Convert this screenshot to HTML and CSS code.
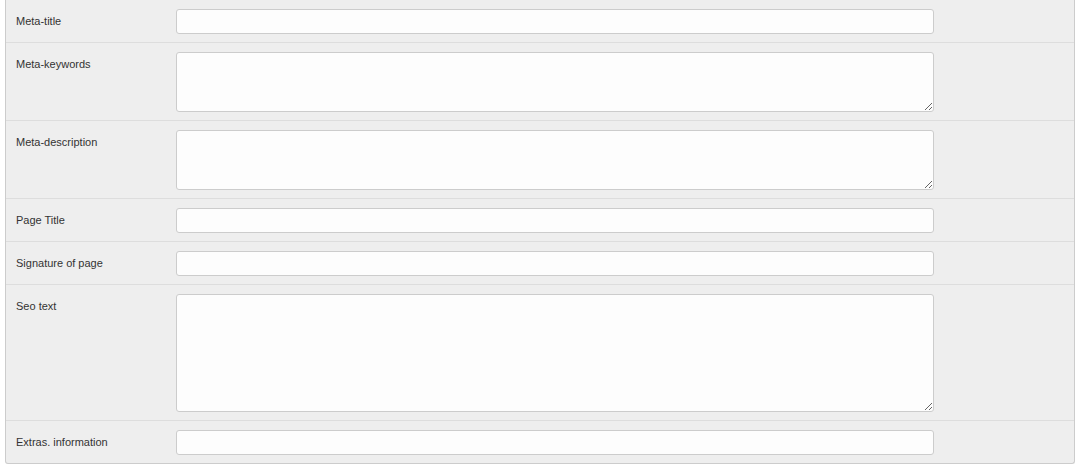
FILE: index.html
```html
<!doctype html>
<html lang="en">
	<head>
		<meta charset="utf-8">
		<title>SEO</title>
		<link rel="stylesheet" href="styles.css">
	</head>
	<body>
		<div class="seo-form">
			<div class="form-row">
				<label class="form-label" for="meta_title">Meta-title</label>
				<input id="meta_title" class="form-input" type="text" />
			</div>
			<div class="form-row">
				<label class="form-label" for="meta_keywords">Meta-keywords</label>
				<textarea id="meta_keywords" class="form-input form-area"></textarea>
			</div>
			<div class="form-row">
				<label class="form-label" for="meta_description">Meta-description</label>
				<textarea id="meta_description" class="form-input form-area"></textarea>
			</div>
			<div class="form-row">
				<label class="form-label" for="page_title">Page Title</label>
				<input id="page_title" class="form-input" type="text" />
			</div>
			<div class="form-row">
				<label class="form-label" for="page_signature">Signature of page</label>
				<input id="page_signature" class="form-input" type="text" />
			</div>
			<div class="form-row">
				<label class="form-label" for="seo_text">Seo text</label>
				<textarea id="seo_text" class="form-input form-area form-area-big"></textarea>
			</div>
			<div class="form-row">
				<label class="form-label" for="extra_info">Extras. information</label>
				<input id="extra_info" class="form-input" type="text" />
			</div>
		</div>
	</body>
</html>
```

FILE: styles.css
```css
html {
	font-family: "Liberation Sans", Arial, sans-serif;
}

body {
	margin: 0 7px 0 5px;
}

.seo-form {
	background: #eeeeee;
	border: 1px solid #cccccc;
	border-top: 0;
	border-radius: 0 0 3px 3px;
}

.form-row {
	display: flex;
	align-items: flex-start;
	padding: 9px 10px 8px 10px;
	border-bottom: 1px solid #dddddd;
}

.form-row:last-child {
	border-bottom: 0;
}

.form-label {
	width: 160px;
	flex: none;
	font-size: 11px;
	line-height: 25px;
	color: #333333;
}

.form-input {
	box-sizing: border-box;
	width: 758px;
	height: 25px;
	margin: 0;
	padding: 3px 6px;
	border: 1px solid #cccccc;
	border-radius: 3px;
	background: #fdfdfd;
	font-family: inherit;
	font-size: 12px;
	color: #333333;
}

.form-area {
	height: 60px;
	display: block;
}

.form-area-big {
	height: 118px;
}
```
